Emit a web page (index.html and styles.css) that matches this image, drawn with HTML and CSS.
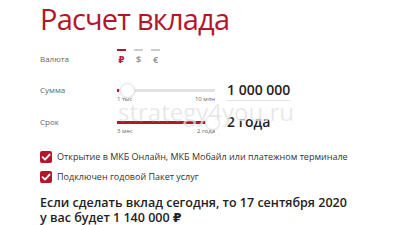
FILE: index.html
```html
<!DOCTYPE html>
<html lang="ru">
<head>
<meta charset="utf-8">
<link rel="stylesheet" href="styles.css">
</head>
<body>
<div class="page">
  <h1 class="title">Расчет вклада</h1>
  <div class="form">
    <div class="row row-currency">
      <div class="label">Валюта</div>
      <div class="currencies">
        <div class="cur cur-active"><span class="cur-bar"></span><span class="cur-sym">₽</span></div>
        <div class="cur"><span class="cur-bar"></span><span class="cur-sym">$</span></div>
        <div class="cur"><span class="cur-bar"></span><span class="cur-sym">€</span></div>
      </div>
    </div>
    <div class="row row-slider">
      <div class="label">Сумма</div>
      <div class="slider">
        <div class="track">
          <span class="fill" style="width:2px"></span>
          <span class="knob" style="left:10px"></span>
        </div>
        <div class="marks"><span>1 тыс</span><span>10 млн</span></div>
      </div>
      <div class="value value-line">1 000 000</div>
    </div>
    <div class="row row-slider">
      <div class="label">Срок</div>
      <div class="slider">
        <div class="track">
          <span class="fill" style="width:93px"></span>
          <span class="knob" style="left:95px"></span>
        </div>
        <div class="marks"><span>3 мес</span><span>2 года</span></div>
      </div>
      <div class="value">2 года</div>
    </div>
  </div>
  <div class="checks">
    <div class="check"><span class="box"><svg viewBox="0 0 12 12" width="12" height="12"><path d="M2.6 6.2 L5 8.6 L9.6 3.6" fill="none" stroke="#fff" stroke-width="1.9" stroke-linecap="round" stroke-linejoin="round"/></svg></span><span>Открытие в МКБ Онлайн, МКБ Мобайл или платежном терминале</span></div>
    <div class="check"><span class="box"><svg viewBox="0 0 12 12" width="12" height="12"><path d="M2.6 6.2 L5 8.6 L9.6 3.6" fill="none" stroke="#fff" stroke-width="1.9" stroke-linecap="round" stroke-linejoin="round"/></svg></span><span>Подключен годовой Пакет услуг</span></div>
  </div>
  <div class="result">
    <div class="result-line">Если сделать вклад сегодня, то 17 сентября 2020</div>
    <div class="result-line">у вас будет 1 140 000 ₽</div>
  </div>
  <div class="watermark">strategy4you.ru</div>
</div>
</body>
</html>
```
FILE: styles.css
```css
* { box-sizing: border-box; }
html, body { margin: 0; padding: 0; background: #fff; }
body { width: 400px; height: 225px; overflow: hidden; font-family: "Open Sans", "DejaVu Sans", sans-serif; color: #222; }
.page { position: relative; padding-left: 40px; }
.title { margin: 0; height: 40px; font-family: "Open Sans", sans-serif; font-weight: 400; font-size: 29px; line-height: 38px; letter-spacing: -0.8px; color: #b5152b; }
.form { display: flex; flex-direction: column; }
.row { display: flex; align-items: flex-start; }
.label { width: 77px; font-size: 8px; line-height: 11px; color: #666; }
.row-currency { height: 42px; padding-top: 9px; }
.row-currency .label { padding-top: 4px; }
.currencies { display: flex; gap: 8px; }
.cur { display: flex; flex-direction: column; align-items: center; width: 9px; gap: 4px; }
.cur-bar { width: 9px; height: 2px; background: #ccc; }
.cur-sym { font-size: 9px; font-weight: 700; color: #999; line-height: 10px; }
.cur-active .cur-bar { background: #b5152b; }
.cur-active .cur-sym { color: #b5152b; }
.row-slider { height: 32px; }
.row-slider .label { padding-top: 2px; }
.slider { width: 98px; padding-top: 7px; }
.track { position: relative; height: 3px; background: #e2e2e2; }
.fill { position: absolute; left: 0; top: 0; height: 3px; background: #b5152b; }
.knob { position: absolute; top: -6px; width: 15px; height: 15px; margin-left: -7px; border-radius: 50%; background: #fff; border: 1px solid #e0e0e0; box-shadow: 0 1px 2px rgba(0,0,0,0.08); }
.marks { display: flex; justify-content: space-between; margin-top: 3px; font-size: 6px; line-height: 8px; color: #666; }
.value { margin-left: 12px; font-size: 14px; font-weight: 600; color: #222; line-height: 16px; }
.value-line { border-bottom: 1px solid #e6e6e6; padding-bottom: 2px; }
.checks { display: flex; flex-direction: column; gap: 8px; margin-top: 5px; }
.check { display: flex; align-items: center; gap: 5px; font-size: 9px; font-weight: 500; line-height: 12px; color: #333; height: 12px; }
.box { width: 12px; height: 12px; border-radius: 2px; background: #b5152b; display: flex; flex: none; }
.result { margin-top: 12px; font-size: 12.5px; font-weight: 600; color: #222; }
.result-line { height: 15px; line-height: 15px; white-space: nowrap; }
.watermark { position: absolute; left: 118px; top: 98px; font-size: 24px; line-height: 28px; font-weight: 400; color: rgba(220,220,220,0.75); -webkit-text-stroke: 0.5px rgba(255,255,255,0.6); pointer-events: none; }
```
